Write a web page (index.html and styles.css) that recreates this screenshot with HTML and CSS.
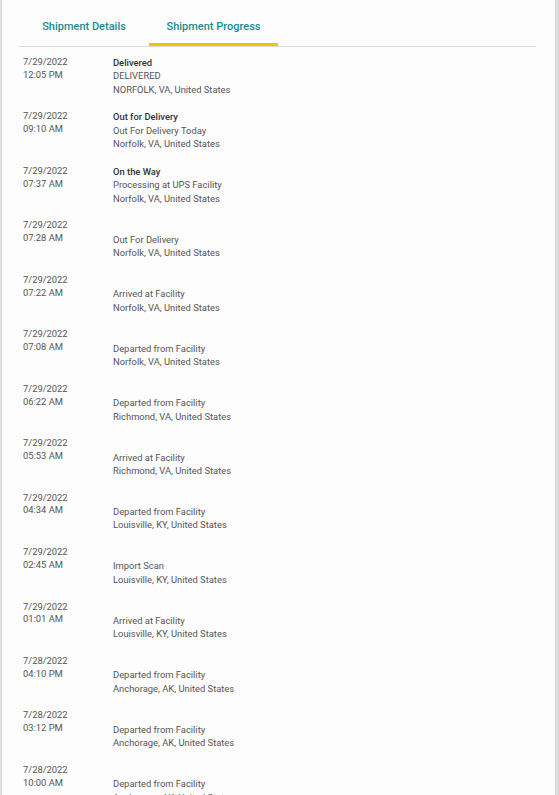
FILE: index.html
```html
<!DOCTYPE html>
<html lang="en">
<head>
  <meta charset="UTF-8">
  <meta name="viewport" content="width=device-width, initial-scale=1.0">
  <title>Shipment Progress</title>
  <link rel="stylesheet" href="styles.css">
</head>
<body>
  <div class="page">
    <div class="panel">
      <!-- Tabs -->
      <div class="tabs">
        <div class="tab">Shipment Details</div>
        <div class="tab active">Shipment Progress</div>
      </div>

      <!-- Progress list -->
      <div class="events">
        <div class="event">
          <div class="when">7/29/2022<br>12:05 PM</div>
          <div class="what"><div class="title">Delivered</div><div>DELIVERED</div><div>NORFOLK, VA, United States</div></div>
        </div>
        <div class="event">
          <div class="when">7/29/2022<br>09:10 AM</div>
          <div class="what"><div class="title">Out for Delivery</div><div>Out For Delivery Today</div><div>Norfolk, VA, United States</div></div>
        </div>
        <div class="event">
          <div class="when">7/29/2022<br>07:37 AM</div>
          <div class="what"><div class="title">On the Way</div><div>Processing at UPS Facility</div><div>Norfolk, VA, United States</div></div>
        </div>
        <div class="event">
          <div class="when">7/29/2022<br>07:28 AM</div>
          <div class="what"><div class="title"></div><div>Out For Delivery</div><div>Norfolk, VA, United States</div></div>
        </div>
        <div class="event">
          <div class="when">7/29/2022<br>07:22 AM</div>
          <div class="what"><div class="title"></div><div>Arrived at Facility</div><div>Norfolk, VA, United States</div></div>
        </div>
        <div class="event">
          <div class="when">7/29/2022<br>07:08 AM</div>
          <div class="what"><div class="title"></div><div>Departed from Facility</div><div>Norfolk, VA, United States</div></div>
        </div>
        <div class="event">
          <div class="when">7/29/2022<br>06:22 AM</div>
          <div class="what"><div class="title"></div><div>Departed from Facility</div><div>Richmond, VA, United States</div></div>
        </div>
        <div class="event">
          <div class="when">7/29/2022<br>05:53 AM</div>
          <div class="what"><div class="title"></div><div>Arrived at Facility</div><div>Richmond, VA, United States</div></div>
        </div>
        <div class="event">
          <div class="when">7/29/2022<br>04:34 AM</div>
          <div class="what"><div class="title"></div><div>Departed from Facility</div><div>Louisville, KY, United States</div></div>
        </div>
        <div class="event">
          <div class="when">7/29/2022<br>02:45 AM</div>
          <div class="what"><div class="title"></div><div>Import Scan</div><div>Louisville, KY, United States</div></div>
        </div>
        <div class="event">
          <div class="when">7/29/2022<br>01:01 AM</div>
          <div class="what"><div class="title"></div><div>Arrived at Facility</div><div>Louisville, KY, United States</div></div>
        </div>
        <div class="event">
          <div class="when">7/28/2022<br>04:10 PM</div>
          <div class="what"><div class="title"></div><div>Departed from Facility</div><div>Anchorage, AK, United States</div></div>
        </div>
        <div class="event">
          <div class="when">7/28/2022<br>03:12 PM</div>
          <div class="what"><div class="title"></div><div>Departed from Facility</div><div>Anchorage, AK, United States</div></div>
        </div>
        <div class="event">
          <div class="when">7/28/2022<br>10:00 AM</div>
          <div class="what"><div class="title"></div><div>Departed from Facility</div><div>Anchorage, AK, United States</div></div>
        </div>
      </div>
    </div>
  </div>
</body>
</html>
```

FILE: styles.css
```css
body {
  margin: 0;
  font-family: Roboto, 'Liberation Sans', sans-serif;
  background-color: #fdfdfd;
}

.page {
  height: 100vh;
  overflow: hidden;
  border-left: 2px solid #dedede;
  border-right: 4px solid #dcdcdc;
  box-sizing: border-box;
}

.panel {
  margin: 0 19px 0 17px;
}

.tabs {
  display: flex;
  height: 46px;
  border-bottom: 1px solid #dcdcdc;
}

.tab {
  width: 130px;
  font-size: 11px;
  font-weight: 500;
  color: #1d8a8c;
  text-align: center;
  padding-top: 20px;
  box-sizing: border-box;
}

.tab.active {
  width: 129px;
  border-bottom: 3px solid #f5c200;
}

.events {
  padding: 9px 0 0 4px;
}

.event {
  display: flex;
  font-size: 9.4px;
  line-height: 13.4px;
  color: #555;
  padding-bottom: 14.25px;
}

.when {
  width: 90px;
  line-height: 12.8px;
}

.title {
  height: 13.4px;
  font-weight: 500;
  color: #333;
}
```
